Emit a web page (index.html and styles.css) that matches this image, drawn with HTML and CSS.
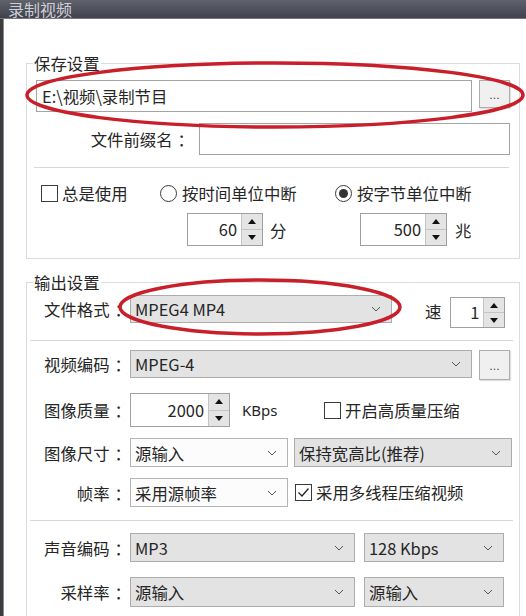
FILE: index.html
```html
<!DOCTYPE html>
<html lang="zh-CN">
<head>
<meta charset="utf-8">
<title>录制视频</title>
<link rel="stylesheet" href="styles.css">
</head>
<body>
<div class="window">
  <div class="titlebar">录制视频</div>
  <div class="frame">
    <div class="edge"></div>
    <div class="client">
      <section class="group g-save">
        <div class="group-title">保存设置</div>
        <div class="row path-row">
          <div class="textbox path">E:\视频\录制节目</div>
          <div class="btn dots">...</div>
        </div>
        <div class="row prefix-row">
          <span class="lbl">文件前缀名<span class="colon">：</span></span>
          <div class="textbox prefix"></div>
        </div>
        <div class="sep sep-a"></div>
        <div class="opt-grid opts">
          <label class="check"><span class="box"></span>总是使用</label>
          <label class="radio"><span class="circle"></span>按时间单位中断</label>
          <label class="radio on"><span class="circle"></span>按字节单位中断</label>
        </div>
        <div class="opt-grid spins">
          <span></span>
          <div class="spin-unit s-min">
            <div class="spin"><span class="val">60</span><span class="arrows"><span class="up"></span><span class="dn"></span></span></div>
            <span class="unit">分</span>
          </div>
          <div class="spin-unit s-mb">
            <div class="spin"><span class="val">500</span><span class="arrows"><span class="up"></span><span class="dn"></span></span></div>
            <span class="unit">兆</span>
          </div>
        </div>
      </section>

      <section class="group g-out">
        <div class="group-title">输出设置</div>
        <div class="frow r1">
          <span class="flbl">文件格式<span class="colon">：</span></span>
          <div class="combo w-fmt"><span>MPEG4 MP4</span><svg class="chev" width="10" height="6" viewBox="0 0 10 6"><path d="M1 1l4 4 4-4"/></svg></div>
          <span class="speed">速</span>
          <div class="spin s-speed"><span class="val">1</span><span class="arrows"><span class="up"></span><span class="dn"></span></span></div>
        </div>
        <div class="sep sep-b"></div>
        <div class="frow r2">
          <span class="flbl">视频编码<span class="colon">：</span></span>
          <div class="combo w-vcodec"><span>MPEG-4</span><svg class="chev" width="10" height="6" viewBox="0 0 10 6"><path d="M1 1l4 4 4-4"/></svg></div>
          <div class="btn dots dots2">...</div>
        </div>
        <div class="frow r3">
          <span class="flbl">图像质量<span class="colon">：</span></span>
          <div class="spin s-quality"><span class="val">2000</span><span class="arrows"><span class="up"></span><span class="dn"></span></span></div>
          <span class="kbps">KBps</span>
          <label class="check"><span class="box"></span>开启高质量压缩</label>
        </div>
        <div class="frow r4">
          <span class="flbl">图像尺寸<span class="colon">：</span></span>
          <div class="combo white w-half"><span>源输入</span><svg class="chev" width="10" height="6" viewBox="0 0 10 6"><path d="M1 1l4 4 4-4"/></svg></div>
          <div class="combo w-ratio"><span>保持宽高比(推荐)</span><svg class="chev" width="10" height="6" viewBox="0 0 10 6"><path d="M1 1l4 4 4-4"/></svg></div>
        </div>
        <div class="frow r5">
          <span class="flbl">帧率<span class="colon">：</span></span>
          <div class="combo white w-half"><span>采用源帧率</span><svg class="chev" width="10" height="6" viewBox="0 0 10 6"><path d="M1 1l4 4 4-4"/></svg></div>
          <label class="check checked mt"><span class="box"><svg width="15" height="15" viewBox="0 0 15 15"><path d="M2.5 7.5l3.5 3.5 6.5-7.5"/></svg></span>采用多线程压缩视频</label>
        </div>
        <div class="sep sep-c"></div>
        <div class="frow r6">
          <span class="flbl">声音编码<span class="colon">：</span></span>
          <div class="combo w-acodec"><span>MP3</span><svg class="chev" width="10" height="6" viewBox="0 0 10 6"><path d="M1 1l4 4 4-4"/></svg></div>
          <div class="combo w-rate"><span>128 Kbps</span><svg class="chev" width="10" height="6" viewBox="0 0 10 6"><path d="M1 1l4 4 4-4"/></svg></div>
        </div>
        <div class="frow r7">
          <span class="flbl">采样率<span class="colon">：</span></span>
          <div class="combo w-acodec"><span>源输入</span><svg class="chev" width="10" height="6" viewBox="0 0 10 6"><path d="M1 1l4 4 4-4"/></svg></div>
          <div class="combo w-rate"><span>源输入</span><svg class="chev" width="10" height="6" viewBox="0 0 10 6"><path d="M1 1l4 4 4-4"/></svg></div>
        </div>
      </section>
    </div>
  </div>
  <svg class="marks" width="526" height="616" viewBox="0 0 526 616">
    <ellipse cx="275" cy="95" rx="248" ry="32"/>
    <ellipse cx="260" cy="307" rx="140" ry="27"/>
  </svg>
</div>
</body>
</html>
```

FILE: styles.css
```css
* { box-sizing: border-box; }
html, body { margin: 0; padding: 0; }
body {
  width: 526px;
  height: 616px;
  overflow: hidden;
  background: #fff;
  font-family: "Noto Sans CJK SC", "Noto Sans", sans-serif;
  font-size: 16.4px;
  color: #262626;
}
.window { position: relative; width: 526px; height: 616px; overflow: hidden; }

.titlebar {
  height: 18px;
  line-height: 18px;
  padding-left: 8px;
  font-size: 16px;
  color: #cdced4;
  background: linear-gradient(#60626c, #3f414d);
  box-shadow: 0 1px 0 #777;
  position: relative;
  z-index: 1;
}
.frame { display: flex; height: 598px; }
.edge { width: 4px; background: #3b3b40; border-right: 1px solid #8a8a8a; flex: none; }
.client { flex: 1; padding-top: 45px; padding-left: 22px; }

.group {
  width: 494px;
  border: 1px solid #dcdcdc;
}
.group-title {
  width: max-content;
  margin: -10px 0 0 6px;
  padding: 0 1px;
  background: #fff;
  line-height: 18px;
}
.g-save { padding-bottom: 12px; }
.g-out { margin-top: 23px; padding-bottom: 30px; }

.colon { display: inline-block; width: 1em; padding-left: 5px; }

.row { display: flex; padding: 0 8px 0 9px; }
.path-row { margin-top: 8px; align-items: flex-start; gap: 7px; }
.textbox { height: 32px; border: 1px solid #a4a4a4; background: #fff; }
.path { width: 436px; padding-left: 5px; line-height: 30px; }
.btn {
  border: 1px solid #adadad;
  background: #f0f0f0;
  box-shadow: 1px 1px 1px rgba(0,0,0,0.12);
  text-align: center;
  font-size: 11px;
  color: #444;
  font-family: "DejaVu Sans", sans-serif;
}
.dots { width: 31px; height: 28px; line-height: 30px; }
.prefix-row { margin-top: 11px; justify-content: flex-end; align-items: center; padding-right: 9px; }
.lbl { margin-right: 10px; }
.prefix { width: 311px; }

.sep { height: 1px; background: #d8d8d8; }
.sep-a { margin: 12px 10px 0 7px; }

.opt-grid {
  display: grid;
  grid-template-columns: 119px 175px auto;
  padding-left: 14px;
  align-items: center;
}
.opts { margin-top: 17px; height: 17px; line-height: 17px; }
.spins { margin-top: 11px; }

.check, .radio { display: flex; align-items: center; gap: 4px; line-height: 17px; white-space: nowrap; }
.radio { gap: 5px; }
.box { width: 17px; height: 17px; border: 1px solid #3a3a3a; background: #fff; flex: none; display: flex; align-items: center; justify-content: center; }
.box svg path { fill: none; stroke: #222; stroke-width: 1.3; }
.circle { width: 17px; height: 17px; border: 1px solid #3a3a3a; border-radius: 50%; background: #fff; flex: none; display: flex; align-items: center; justify-content: center; }
.radio.on .circle::after { content: ""; width: 9px; height: 9px; border-radius: 50%; background: #333; }

.spin-unit { display: flex; align-items: center; }
.s-min { margin-left: 27px; gap: 7px; }
.s-min .spin { width: 76px; height: 33px; }
.s-mb { margin-left: 25px; gap: 8px; }
.s-mb .spin { width: 87px; height: 33px; }

.spin { display: flex; border: 1px solid #a0a0a0; background: #fff; flex: none; }
.spin .val { flex: 1; text-align: right; padding-right: 4px; align-self: center; line-height: 1; }
.arrows { width: 21px; display: flex; flex-direction: column; border-left: 1px solid #c4c4c4; }
.arrows span { flex: 1; background: #e4e4e4; display: flex; align-items: center; justify-content: center; }
.arrows .dn { border-top: 1px solid #c4c4c4; }
.arrows .up::before { content: ""; border-left: 4px solid transparent; border-right: 4px solid transparent; border-bottom: 5px solid #111; }
.arrows .dn::before { content: ""; border-left: 4px solid transparent; border-right: 4px solid transparent; border-top: 5px solid #111; }

.frow { display: flex; align-items: center; }
.flbl { width: 99px; margin-right: 4px; text-align: right; flex: none; white-space: nowrap; }
.combo {
  display: flex;
  align-items: center;
  justify-content: space-between;
  height: 29px;
  padding: 0 10px 0 4px;
  border: 1px solid #adadad;
  background: #e3e3e3;
  flex: none;
  white-space: nowrap;
}
.combo.white { background: #fcfcfc; border-color: #b4b4b4; }
.chev path { fill: none; stroke: #555; stroke-width: 1; }

.r1 { margin-top: 4px; align-items: flex-start; }
.r1 .flbl { line-height: 28px; }
.w-fmt { width: 262px; height: 28px; }
.speed { margin-left: 33px; line-height: 33px; }
.s-speed { margin-left: 9px; margin-top: 2px; width: 55px; height: 31px; }

.sep-b { margin: 12px 6px 0 3px; }
.r2 { margin-top: 9px; align-items: flex-start; }
.r2 .flbl { line-height: 28px; }
.w-vcodec { width: 342px; height: 28px; }
.dots2 { margin-left: 7px; height: 30px; line-height: 32px; }

.r3 { margin-top: 13px; }
.s-quality { width: 100px; height: 34px; }
.kbps { margin-left: 12px; width: 82px; font-family: "Noto Sans", sans-serif; font-size: 15px; }

.r4 { margin-top: 11px; }
.w-half { width: 158px; }
.w-ratio { width: 218px; margin-left: 6px; }
.r5 { margin-top: 11px; }
.mt { margin-left: 7px; }

.sep-c { margin: 13px 6px 0 3px; }
.r6 { margin-top: 12px; }
.r7 { margin-top: 15px; }
.r7 .combo { height: 30px; }
.w-acodec { width: 225px; }
.w-rate { width: 140px; margin-left: 9px; }

.marks { position: absolute; left: 0; top: 0; pointer-events: none; z-index: 2; }
.marks ellipse { fill: none; stroke: #c91f2a; stroke-width: 3.5; }
```
